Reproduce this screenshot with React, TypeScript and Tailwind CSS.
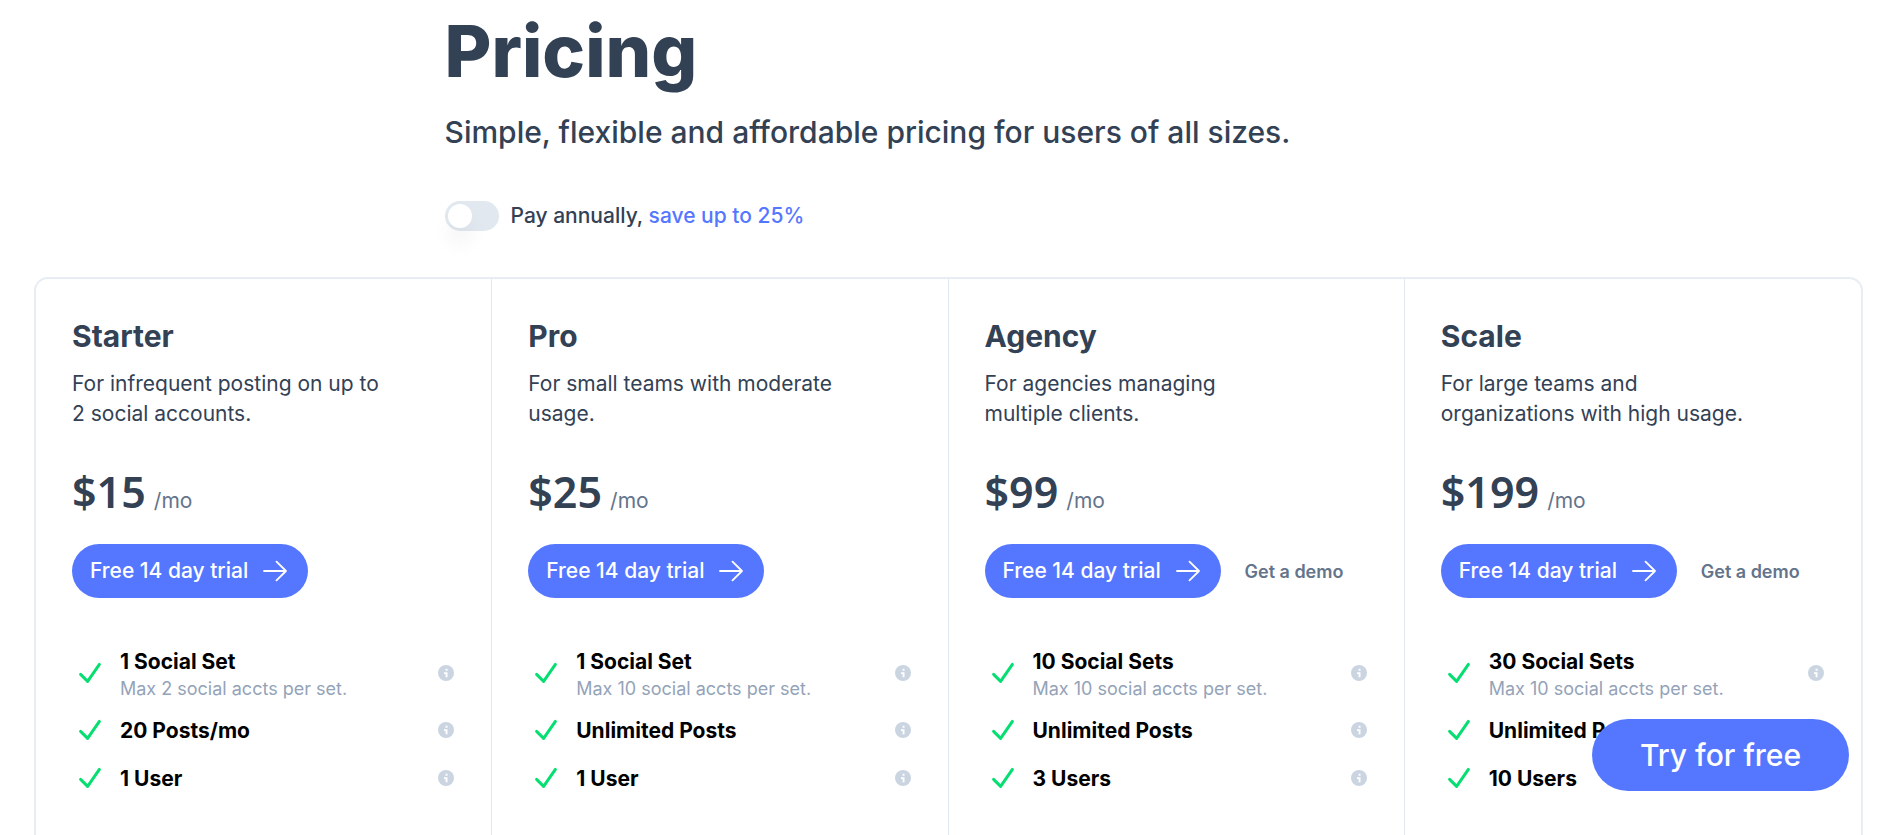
import React, { useState } from 'react';

interface Feature {
  title: string;
  note?: string;
}

interface Plan {
  name: string;
  description: [string, string];
  price: number;
  demo: boolean;
  features: Feature[];
}

const plans: Plan[] = [
  {
    name: 'Starter',
    description: ['For infrequent posting on up to', '2 social accounts.'],
    price: 15,
    demo: false,
    features: [
      { title: '1 Social Set', note: 'Max 2 social accts per set.' },
      { title: '20 Posts/mo' },
      { title: '1 User' },
    ],
  },
  {
    name: 'Pro',
    description: ['For small teams with moderate', 'usage.'],
    price: 25,
    demo: false,
    features: [
      { title: '1 Social Set', note: 'Max 10 social accts per set.' },
      { title: 'Unlimited Posts' },
      { title: '1 User' },
    ],
  },
  {
    name: 'Agency',
    description: ['For agencies managing', 'multiple clients.'],
    price: 99,
    demo: true,
    features: [
      { title: '10 Social Sets', note: 'Max 10 social accts per set.' },
      { title: 'Unlimited Posts' },
      { title: '3 Users' },
    ],
  },
  {
    name: 'Scale',
    description: ['For large teams and', 'organizations with high usage.'],
    price: 199,
    demo: true,
    features: [
      { title: '30 Social Sets', note: 'Max 10 social accts per set.' },
      { title: 'Unlimited Posts' },
      { title: '10 Users' },
    ],
  },
];

function ArrowIcon() {
  return (
    <svg className="w-6 h-6 shrink-0" viewBox="0 0 24 24" fill="none" stroke="currentColor" strokeWidth="1.8" strokeLinecap="round" strokeLinejoin="round" aria-hidden="true">
      <path d="M1 12h22M13.5 2.6L23 12l-9.5 9.4" />
    </svg>
  );
}

function CheckIcon() {
  return (
    <svg className="w-6 h-6 shrink-0 text-[#05df72]" viewBox="0 0 24 24" fill="none" stroke="currentColor" strokeWidth="3" strokeLinecap="round" strokeLinejoin="round" aria-hidden="true">
      <path d="M2.6 13.4L9.6 20.4L21.4 3.4" />
    </svg>
  );
}

function InfoIcon() {
  return (
    <svg className="w-4 h-4" viewBox="0 0 16 16" aria-hidden="true">
      <circle cx="8" cy="8" r="8" fill="#cbd5e1" />
      <path d="M7.6 3.8h1.9v2H7.6zM6 7.2h3.5v5H7.6V9H6z" fill="#fff" />
    </svg>
  );
}

function PlanColumn({ plan }: { plan: Plan }) {
  return (
    <section className="px-9 pt-9 pb-12 border-[#e2e8f0] not-last:border-r">
      <h2 className="text-[30px] leading-[42px] font-bold">{plan.name}</h2>
      <p className="mt-3 text-[21px] leading-[30px]">
        {plan.description[0]}
        <br />
        {plan.description[1]}
      </p>

      <div className="mt-9 flex h-[55px] items-baseline gap-2">
        <span className="font-['Noto_Sans',sans-serif] text-[43px] leading-[54px] font-semibold">${plan.price}</span>
        <span className="text-[21px] text-[#64748b]">/mo</span>
      </div>

      <div className="mt-6 flex items-center gap-6">
        <a href="#trial" className="flex h-[54px] w-[236px] items-center gap-[15px] rounded-full bg-[#5577ff] pl-[18px] text-[21px] font-medium whitespace-nowrap text-white">
          Free 14 day trial
          <ArrowIcon />
        </a>
        {plan.demo && (
          <a href="#demo" className="text-[18px] font-semibold text-[#64748b]">
            Get a demo
          </a>
        )}
      </div>

      <ul className="mt-[42px] pr-px text-black">
        {plan.features.map((feature) => (
          <li key={feature.title} className="flex min-h-12 items-center py-1 pl-1.5">
            <CheckIcon />
            <div className={`ml-[18px] flex-1 ${feature.note ? 'pt-1' : ''}`}>
              <div className="text-[21px] leading-[27px] font-bold">{feature.title}</div>
              {feature.note && <div className="text-[18px] leading-[27px] text-[#94a3b8]">{feature.note}</div>}
            </div>
            <button type="button" aria-label={`About ${feature.title}`}>
              <InfoIcon />
            </button>
          </li>
        ))}
      </ul>
    </section>
  );
}

export default function App() {
  const [annual, setAnnual] = useState(false);

  return (
    <div className="min-h-screen bg-white pl-[34px] pr-[30px] font-['Inter',sans-serif] text-[#334155]">
      <header className="mx-auto max-w-[1008px] pt-[15px]">
        <h1 className="text-[72px] leading-[72px] font-extrabold">Pricing</h1>
        <p className="mt-[23px] text-[30px] leading-[45px] font-medium">
          Simple, flexible and affordable pricing for users of all sizes.
        </p>

        <label className="mt-[46px] flex w-fit cursor-pointer items-center gap-3">
          <input
            type="checkbox"
            className="peer sr-only"
            checked={annual}
            onChange={() => setAnnual(!annual)}
          />
          <span className="flex h-[30px] w-[54px] items-center rounded-full bg-[#e2e8f0] p-[3px] peer-checked:justify-end peer-checked:bg-[#5577ff]">
            <span className="h-6 w-6 rounded-full bg-white shadow-[0_16px_20px_rgba(0,0,0,0.05)]" />
          </span>
          <span className="text-[21px] leading-[30px] font-medium">
            Pay annually, <span className="text-[#5577ff]">save up to 25%</span>
          </span>
        </label>
      </header>

      <main className="mt-[46px] grid grid-cols-4 rounded-t-[14px] border-2 border-b-0 border-[#e8edf4]">
        {plans.map((plan) => (
          <PlanColumn key={plan.name} plan={plan} />
        ))}
      </main>

      <a href="#try" className="fixed right-11 bottom-11 flex h-[72px] w-[257px] items-center justify-center rounded-full bg-[#5577ff] text-[30px] font-medium text-white">
        Try for free
      </a>
    </div>
  );
}
